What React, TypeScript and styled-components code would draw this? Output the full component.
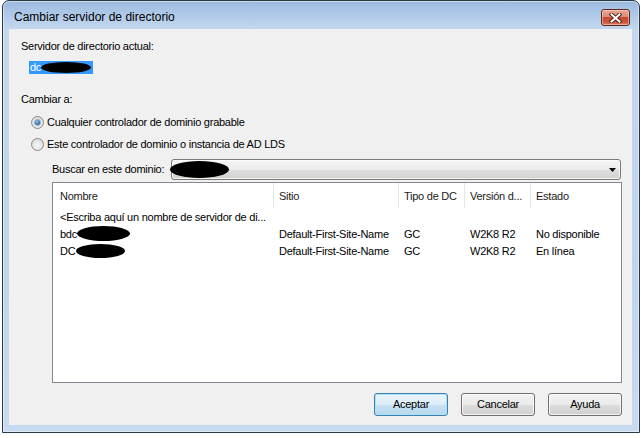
import React from "react";
import styled, { createGlobalStyle } from "styled-components";

const Global = createGlobalStyle`
  html, body { margin: 0; padding: 0; background: #ffffff; }
  body {
    font-family: "Liberation Sans", Arial, sans-serif;
    font-size: 11px;
    letter-spacing: -0.25px;
    color: #000000;
  }
`;

const Page = styled.div`
  width: 644px;
  height: 438px;
  padding-left: 2px;
  box-sizing: border-box;
`;

const Window = styled.div`
  width: 638px;
  height: 433px;
  box-sizing: border-box;
  border: 1px solid #2c3846;
  border-radius: 7px 7px 0 0;
  background: linear-gradient(to bottom, #9cbae0 0px, #c3d8ef 28px, #bfd5ed 60%, #c6dbf0 100%);
  display: flex;
  flex-direction: column;
  padding: 0 7px 7px 6px;
  box-shadow: inset 0 0 0 1px rgba(255, 255, 255, 0.45);
`;

const TitleBar = styled.div`
  height: 28px;
  display: flex;
  align-items: flex-start;
  justify-content: space-between;
  padding: 0 2px 0 5px;
  flex: none;
`;

const Title = styled.div`
  margin-top: 9px;
  line-height: 15px;
  font-family: "Liberation Sans", Arial, sans-serif;
  font-size: 12px;
  letter-spacing: 0;
  color: #000000;
`;

const CloseButton = styled.div`
  margin-top: 8px;
  width: 29px;
  height: 17px;
  box-sizing: border-box;
  border: 1px solid #5e2a20;
  border-radius: 3px;
  background: linear-gradient(to bottom, #e9a999 0%, #dc8a76 45%, #c84b30 50%, #c9553a 80%, #d9826a 100%);
  box-shadow: inset 0 0 0 1px rgba(255, 220, 210, 0.5);
  display: flex;
  align-items: center;
  justify-content: center;
`;

const Client = styled.div`
  height: 396px;
  box-sizing: border-box;
  background: #f0f0f0;
  padding: 11px 10px 0 12px;
  display: flex;
  flex-direction: column;
  flex: none;
`;

const Label = styled.div<{ $mt?: number; $ml?: number }>`
  line-height: 13px;
  height: 13px;
  margin-top: ${(p) => p.$mt ?? 0}px;
  margin-left: ${(p) => p.$ml ?? 0}px;
  white-space: nowrap;
`;

const Selected = styled.div`
  margin-top: 8px;
  margin-left: 8px;
  height: 13px;
  width: 64px;
  background: #3399ff;
  color: #ffffff;
  line-height: 13px;
  display: flex;
  align-items: center;
  padding-left: 1px;
  box-sizing: border-box;
`;

const Blob = styled.span<{ $w: number; $h: number; $ml?: number }>`
  display: inline-block;
  flex: none;
  width: ${(p) => p.$w}px;
  height: ${(p) => p.$h}px;
  margin-left: ${(p) => p.$ml ?? 0}px;
  background: #000000;
  border-radius: 50%;
  vertical-align: middle;
`;

const RadioGroup = styled.div`
  margin-top: 8px;
  padding-left: 10px;
  display: flex;
  flex-direction: column;
  gap: 6px;
`;

const RadioRow = styled.div`
  height: 16px;
  display: flex;
  align-items: center;
  gap: 3px;
  white-space: nowrap;
`;

const RadioCircle = styled.span<{ $checked?: boolean }>`
  width: 13px;
  height: 13px;
  box-sizing: border-box;
  border-radius: 50%;
  border: 1px solid #8a8a8a;
  background: radial-gradient(circle at 50% 60%, #f8f8f8 0%, #e4e4e4 55%, #cfcfcf 100%);
  display: flex;
  align-items: center;
  justify-content: center;
  flex: none;
  &::after {
    content: "";
    display: ${(p) => (p.$checked ? "block" : "none")};
    width: 5px;
    height: 5px;
    border-radius: 50%;
    background: radial-gradient(circle at 40% 35%, #9fd0f2 0%, #3d7fb8 45%, #174a7a 100%);
    box-shadow: 0 0 0 1px rgba(60, 110, 160, 0.45);
  }
`;

const SearchRow = styled.div`
  margin-top: 7px;
  padding-left: 31px;
  display: flex;
  align-items: center;
  height: 21px;
`;

const SearchLabel = styled.span`
  width: 119px;
  flex: none;
  white-space: nowrap;
  line-height: 13px;
`;

const Combo = styled.div`
  width: 450px;
  height: 21px;
  box-sizing: border-box;
  border: 1px solid #7a7a7a;
  border-radius: 3px;
  background: linear-gradient(to bottom, #f4f4f4 0%, #ececec 50%, #dedede 51%, #d2d2d2 100%);
  box-shadow: inset 0 0 0 1px rgba(255, 255, 255, 0.7);
  display: flex;
  align-items: center;
  justify-content: space-between;
  padding-right: 4px;
`;

const List = styled.div`
  margin-top: 2px;
  margin-left: 31px;
  width: 570px;
  height: 201px;
  box-sizing: border-box;
  border: 1px solid #828790;
  background: #ffffff;
  display: flex;
  flex-direction: column;
`;

const Columns = "220px 125px 66px 66px 1fr";

const HeaderRow = styled.div`
  height: 25px;
  display: grid;
  grid-template-columns: ${Columns};
  flex: none;
`;

const HeaderCell = styled.div<{ $first?: boolean }>`
  display: flex;
  align-items: center;
  padding-left: ${(p) => (p.$first ? 7 : 5)}px;
  border-left: ${(p) => (p.$first ? "none" : "1px solid #e3e6ea")};
  white-space: nowrap;
  overflow: hidden;
  color: #1a1a1a;
`;

const Row = styled.div`
  height: 17px;
  display: grid;
  grid-template-columns: ${Columns};
  flex: none;
`;

const Cell = styled.div<{ $first?: boolean }>`
  display: flex;
  align-items: center;
  padding-left: ${(p) => (p.$first ? 7 : 6)}px;
  white-space: nowrap;
`;

const ButtonRow = styled.div`
  margin-top: 10px;
  display: flex;
  justify-content: flex-end;
  gap: 13px;
`;

const Button = styled.div<{ $default?: boolean }>`
  width: 74px;
  height: 23px;
  box-sizing: border-box;
  border: 1px solid ${(p) => (p.$default ? "#3c7fb1" : "#707070")};
  border-radius: 3px;
  background: ${(p) =>
    p.$default
      ? "linear-gradient(to bottom, #eaf5fc 0%, #dcedf8 50%, #c6e2f4 51%, #b6d9ee 100%)"
      : "linear-gradient(to bottom, #f2f2f2 0%, #ebebeb 50%, #dddddd 51%, #cfcfcf 100%)"};
  box-shadow: ${(p) =>
    p.$default
      ? "inset 0 0 0 1px #aee0f8"
      : "inset 0 0 0 1px rgba(255, 255, 255, 0.75)"};
  display: flex;
  align-items: center;
  justify-content: center;
  line-height: 13px;
`;

const CloseIcon = () => (
  <svg width="13" height="10" viewBox="0 0 13 10">
    <path d="M2.5 1.5 L10.5 8.5 M10.5 1.5 L2.5 8.5" stroke="#4d1a10" strokeWidth="3.8" strokeLinecap="square" />
    <path d="M2.5 1.5 L10.5 8.5 M10.5 1.5 L2.5 8.5" stroke="#ffffff" strokeWidth="2" strokeLinecap="square" />
  </svg>
);

const ArrowIcon = () => (
  <svg width="7" height="4" viewBox="0 0 7 4">
    <path d="M0 0 L7 0 L3.5 4 Z" fill="#000000" />
  </svg>
);

const rows = [
  { name: "<Escriba aquí un nombre de servidor de di...", blob: null, site: "", type: "", ver: "", state: "" },
  { name: "bdc", blob: { w: 53, h: 15, ml: 0 }, site: "Default-First-Site-Name", type: "GC", ver: "W2K8 R2", state: "No disponible" },
  { name: "DC", blob: { w: 49, h: 14, ml: 1 }, site: "Default-First-Site-Name", type: "GC", ver: "W2K8 R2", state: "En línea" },
];

export default function App() {
  return (
    <>
      <Global />
      <Page>
        <Window>
          <TitleBar>
            <Title>Cambiar servidor de directorio</Title>
            <CloseButton>
              <CloseIcon />
            </CloseButton>
          </TitleBar>
          <Client>
            <Label>Servidor de directorio actual:</Label>
            <Selected>
              dc
              <Blob $w={50} $h={11} />
            </Selected>
            <Label $mt={19}>Cambiar a:</Label>
            <RadioGroup>
              <RadioRow>
                <RadioCircle $checked />
                Cualquier controlador de dominio grabable
              </RadioRow>
              <RadioRow>
                <RadioCircle />
                Este controlador de dominio o instancia de AD LDS
              </RadioRow>
            </RadioGroup>
            <SearchRow>
              <SearchLabel>Buscar en este dominio:</SearchLabel>
              <Combo>
                <Blob $w={59} $h={17} $ml={-2} />
                <ArrowIcon />
              </Combo>
            </SearchRow>
            <List>
              <HeaderRow>
                <HeaderCell $first>Nombre</HeaderCell>
                <HeaderCell>Sitio</HeaderCell>
                <HeaderCell>Tipo de DC</HeaderCell>
                <HeaderCell>Versión d...</HeaderCell>
                <HeaderCell>Estado</HeaderCell>
              </HeaderRow>
              {rows.map((r, i) => (
                <Row key={i}>
                  <Cell $first>
                    {r.name}
                    {r.blob && <Blob $w={r.blob.w} $h={r.blob.h} $ml={r.blob.ml} />}
                  </Cell>
                  <Cell>{r.site}</Cell>
                  <Cell>{r.type}</Cell>
                  <Cell>{r.ver}</Cell>
                  <Cell>{r.state}</Cell>
                </Row>
              ))}
            </List>
            <ButtonRow>
              <Button $default>Aceptar</Button>
              <Button>Cancelar</Button>
              <Button>Ayuda</Button>
            </ButtonRow>
          </Client>
        </Window>
      </Page>
    </>
  );
}
